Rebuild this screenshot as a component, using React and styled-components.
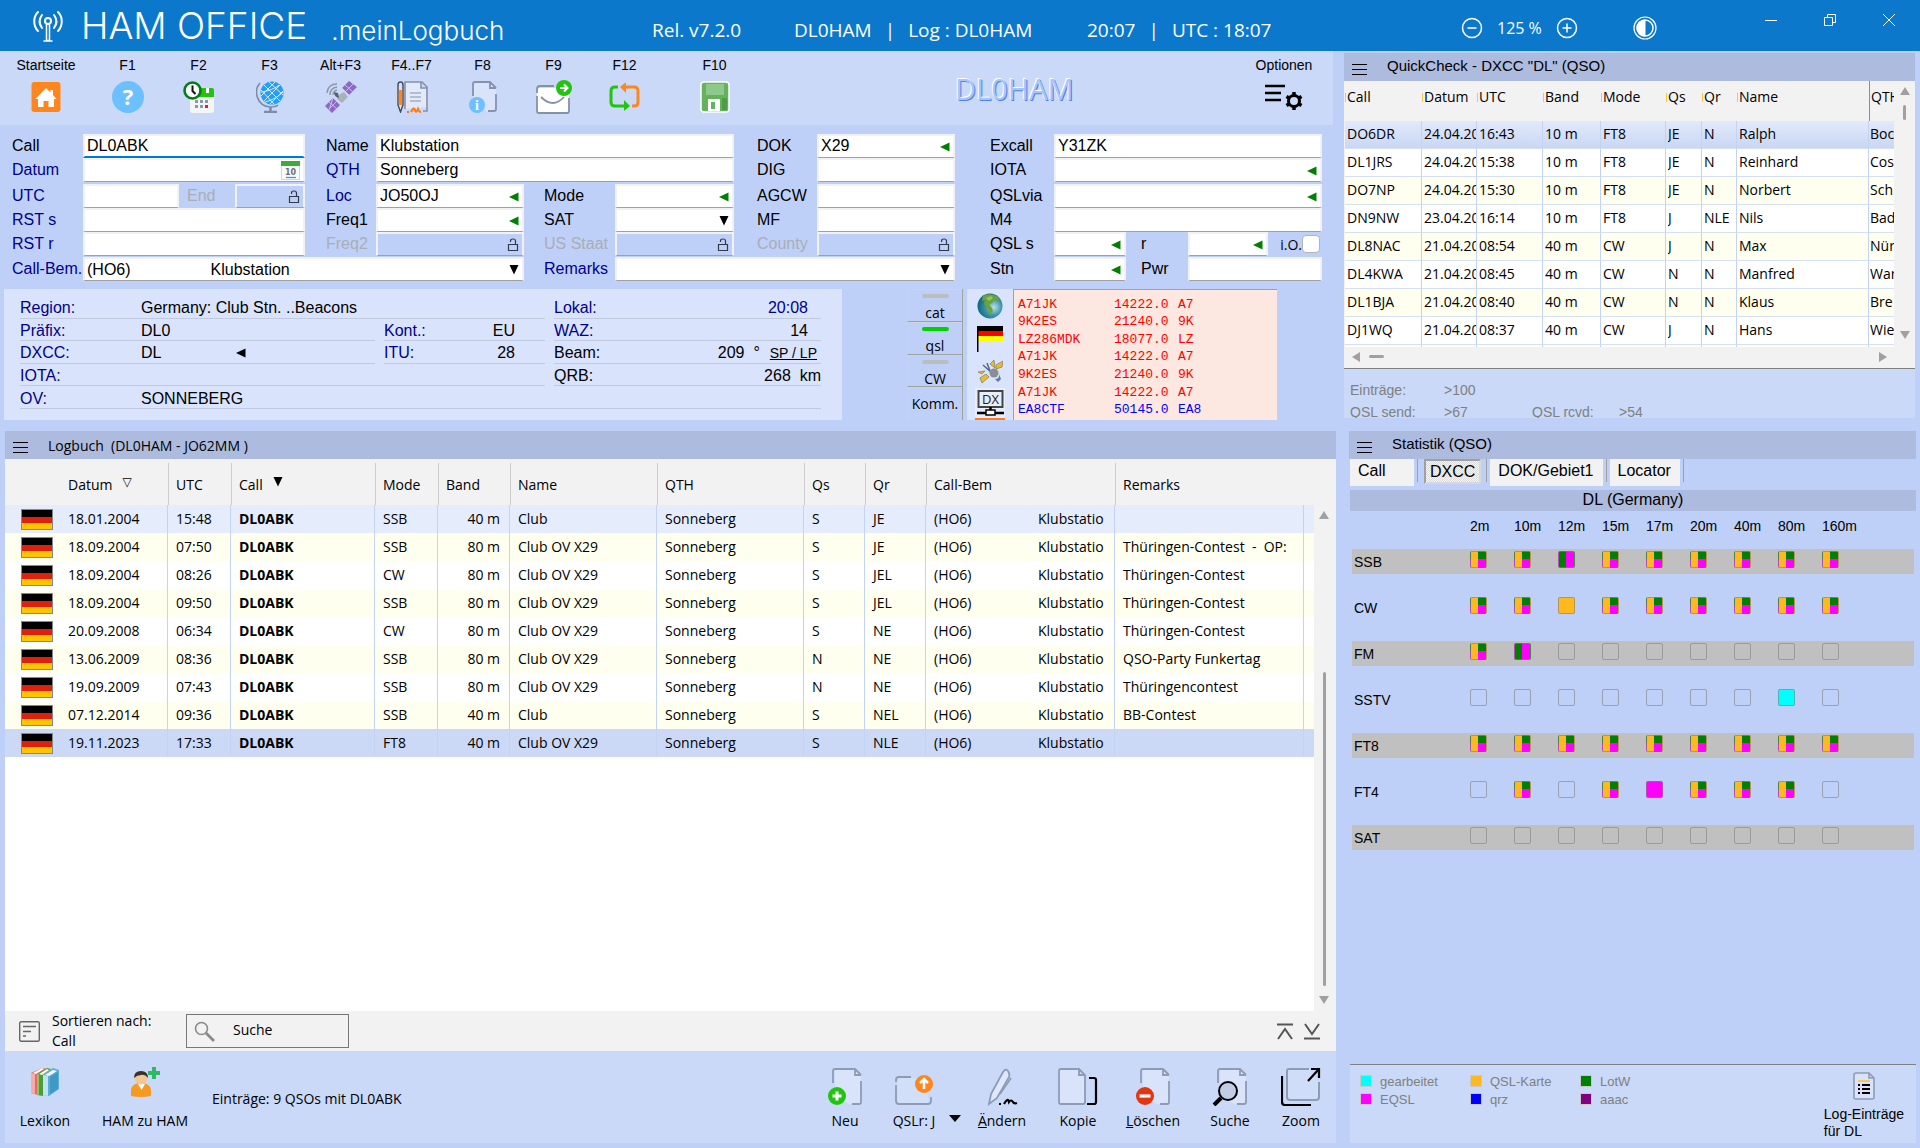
import { Fragment, useId, useState } from "react";
import styled, { createGlobalStyle, css } from "styled-components";

const COLORS = {
  title: "#0b78cc",
  page: "#bfd0f8",
  bar: "#c9d9f7",
  panelHead: "#adbbde",
  light: "#f2f2f2",
  info: "#d9e3fb",
  line: "#a0a0a0",
  navy: "#00008b",
  grid: "#c2d3f3",
  yellow: "#ffffef",
};

const SANS = `"Liberation Sans", Arial, sans-serif`;
const UI = `"Open Sans", "Noto Sans", sans-serif`;

const GlobalStyle = createGlobalStyle`
  *, *::before, *::after {
    box-sizing: border-box;
  }

  body {
    margin: 0;
    background: ${COLORS.page};
    color: #000;
    font-family: ${SANS};
  }

  button, input, select {
    margin: 0;
    padding: 0;
    border: 0;
    background: none;
    color: inherit;
    font: inherit;
  }

  svg {
    display: block;
    flex: none;
  }
`;

/* ---------- Data ---------- */

// [label, span of the field, options]
const FORM_ROWS = [
  [
    ["Call", 3, { value: "DL0ABK", focus: true }],
    ["Name", 3, { value: "Klubstation", indent: 21 }],
    ["DOK", 1, { value: "X29", indent: 23, mark: "left" }],
    ["Excall", 4, { value: "Y31ZK", indent: 35 }],
  ],
  [
    ["Datum", 3, { blue: true, mark: "calendar" }],
    ["QTH", 3, { value: "Sonneberg", blue: true, indent: 21 }],
    ["DIG", 1, { indent: 23 }],
    ["IOTA", 4, { indent: 35, mark: "left" }],
  ],
  [
    ["UTC", 1, { blue: true }],
    ["End", 1, { indent: 8, locked: true }],
    ["Loc", 1, { value: "JO50OJ", blue: true, indent: 21, mark: "left" }],
    ["Mode", 1, { indent: 20, mark: "left" }],
    ["AGCW", 1, { indent: 23 }],
    ["QSLvia", 4, { indent: 35, mark: "left" }],
  ],
  [
    ["RST s", 3, { blue: true }],
    ["Freq1", 1, { indent: 21, mark: "left" }],
    ["SAT", 1, { indent: 20, select: true }],
    ["MF", 1, { indent: 23 }],
    ["M4", 4, { indent: 35 }],
  ],
  [
    ["RST r", 3, { blue: true }],
    ["Freq2", 1, { indent: 21, locked: true }],
    ["US Staat", 1, { indent: 20, locked: true }],
    ["County", 1, { indent: 23, locked: true }],
    ["QSL s", 1, { indent: 35, mark: "left" }],
    ["r", 1, { indent: 15, mark: "left" }],
    ["i.O.", 0, { check: true }],
  ],
  [
    [
      "Call-Bem.",
      5,
      {
        value: "(HO6)" + "\u00a0".repeat(18) + "Klubstation",
        blue: true,
        select: true,
      },
    ],
    ["Remarks", 3, { blue: true, indent: 20, select: true }],
    ["Stn", 1, { indent: 35, mark: "left" }],
    ["Pwr", 2, { indent: 15 }],
  ],
];

const LOG = [
  ["18.01.2004", "15:48", "SSB", "40 m", "Club", "S", "JE", ""],
  ["18.09.2004", "07:50", "SSB", "80 m", "Club OV X29", "S", "JE", "Thüringen-Contest  -  OP:"],
  ["18.09.2004", "08:26", "CW", "80 m", "Club OV X29", "S", "JEL", "Thüringen-Contest"],
  ["18.09.2004", "09:50", "SSB", "80 m", "Club OV X29", "S", "JEL", "Thüringen-Contest"],
  ["20.09.2008", "06:34", "CW", "80 m", "Club OV X29", "S", "NE", "Thüringen-Contest"],
  ["13.06.2009", "08:36", "SSB", "80 m", "Club OV X29", "N", "NE", "QSO-Party Funkertag"],
  ["19.09.2009", "07:43", "SSB", "80 m", "Club OV X29", "N", "NE", "Thüringencontest"],
  ["07.12.2014", "09:36", "SSB", "40 m", "Club", "S", "NEL", "BB-Contest"],
  ["19.11.2023", "17:33", "FT8", "40 m", "Club OV X29", "S", "NLE", ""],
];
const LOG_COLS = [55, 108, 63, 144, 63, 72, 147, 147, 61, 61, 189, 189, 10];

const QUICK = [
  ["DO6DR", "24.04.20", "16:43", "10 m", "FT8", "JE", "N", "Ralph", "Boc"],
  ["DL1JRS", "24.04.20", "15:38", "10 m", "FT8", "JE", "N", "Reinhard", "Cos"],
  ["DO7NP", "24.04.20", "15:30", "10 m", "FT8", "JE", "N", "Norbert", "Sch"],
  ["DN9NW", "23.04.20", "16:14", "10 m", "FT8", "J", "NLE", "Nils", "Bad"],
  ["DL8NAC", "21.04.20", "08:54", "40 m", "CW", "J", "N", "Max", "Nür"],
  ["DL4KWA", "21.04.20", "08:45", "40 m", "CW", "N", "N", "Manfred", "War"],
  ["DL1BJA", "21.04.20", "08:40", "40 m", "CW", "N", "N", "Klaus", "Bre"],
  ["DJ1WQ", "21.04.20", "08:37", "40 m", "CW", "J", "N", "Hans", "Wie"],
  ["", "", "", "", "", "", "", "", ""],
];
const QUICK_COLS = [77, 55, 66, 58, 65, 36, 35, 132, 26];
const QUICK_HEAD = ["Call", "Datum", "UTC", "Band", "Mode", "Qs", "Qr", "Name", "QTH"];

const SPOTS = [
  ["A71JK", "14222.0", "A7"],
  ["9K2ES", "21240.0", "9K"],
  ["LZ286MDK", "18077.0", "LZ"],
  ["A71JK", "14222.0", "A7"],
  ["9K2ES", "21240.0", "9K"],
  ["A71JK", "14222.0", "A7"],
  ["EA8CTF", "50145.0", "EA8"],
];

// q = card + LotW + eQSL, h = LotW + eQSL, k = card, e = eQSL, w = worked, - = none
const BANDS = ["2m", "10m", "12m", "15m", "17m", "20m", "40m", "80m", "160m"];
const STATS = [
  ["SSB", "qqhqqqqqq"],
  ["CW", "qqkqqqqqq"],
  ["FM", "qh-------"],
  ["SSTV", "-------w-"],
  ["FT8", "qqqqqqqqq"],
  ["FT4", "-q-qeqqq-"],
  ["SAT", "---------"],
];
const BOX_FILL = {
  q: "linear-gradient(90deg, #ffb91f 50%, transparent 50%), linear-gradient(#008000 50%, #ff00ff 50%)",
  h: "linear-gradient(90deg, #008000 50%, #ff00ff 50%)",
  k: "#ffb91f",
  e: "#ff00ff",
  w: "#00ffff",
  "-": "transparent",
};

const LEGEND = [
  ["gearbeitet", "#00ffff"],
  ["QSL-Karte", "#ffb91f"],
  ["LotW", "#008000"],
  ["EQSL", "#ff00ff"],
  ["qrz", "#0000ff"],
  ["aaac", "#800080"],
];

/* ---------- Icons ---------- */

const AntennaIcon = () => (
  <svg width="30" height="34" viewBox="0 0 30 34" fill="none" stroke="#fff" strokeWidth="2" strokeLinecap="round">
    <path d="M5 3C0 8 0 17 5 22M9 6c-3 4-3 9 0 13M25 3c5 5 5 14 0 19M21 6c3 4 3 9 0 13" />
    <circle cx="15" cy="12" r="3" />
    <path d="M13.500 16v15.500h3V16M11 32h8" strokeWidth="1.500" />
  </svg>
);

const CircleIcon = ({ plus }) => (
  <svg width="22" height="22" viewBox="0 0 22 22" fill="none" stroke="#fff" strokeWidth="1.500">
    <circle cx="11" cy="11" r="9.500" />
    <path d={plus ? "M6.500 11h9M11 6.500v9" : "M6.500 11h9"} />
  </svg>
);

const ContrastIcon = () => (
  <svg width="24" height="24" viewBox="0 0 24 24" fill="none" stroke="#fff">
    <circle cx="12" cy="12" r="11" strokeWidth="1.200" />
    <circle cx="12" cy="12" r="8" strokeWidth="1.500" />
    <path d="M12 4a8 8 0 0 0 0 16z" fill="#fff" />
  </svg>
);

const WINDOW_PATHS = {
  Minimieren: "M0 6.500h12",
  Wiederherstellen: "M.5 3.500h8v8h-8zM3.500 3.500v-3h8v8h-3",
  Schließen: "M0 0l12 12M12 0L0 12",
};

const HomeIcon = () => (
  <svg width="30" height="32" viewBox="0 0 30 32">
    <rect x="0.500" y="1" width="29" height="30" rx="3" fill="#ff861c" />
    <path d="M15 7L4.500 18H7v8h5.500v-6h5v6H23v-8h2.500L22 14V9h-2.500v2.500z" fill="#fff" />
  </svg>
);

const HelpIcon = () => (
  <svg width="32" height="32" viewBox="0 0 32 32">
    <circle cx="16" cy="16" r="16" fill="#6cc0ff" />
    <text x="16" y="24" textAnchor="middle" fontFamily="Open Sans" fontWeight="700" fontSize="22" fill="#fff">?</text>
  </svg>
);

const ClockIcon = () => (
  <svg width="32" height="32" viewBox="0 0 32 32">
    <path d="M7 15h24v14q0 3-3 3H10q-3 0-3-3z" fill="#f4f6f6" />
    <path d="M14 7h15q2 0 2 2v7H14z" fill="#22c50d" />
    <path d="M23 7v5h3V7" fill="#fff" />
    <path d="M12 19h3v3h-3zM17 19h3v3h-3zM22 19h3v3h-3zM12 24h3v3h-3zM17 24h3v3h-3z" fill="#8a97a8" />
    <path d="M22 24h3v3h-3z" fill="#e02020" />
    <circle cx="9.500" cy="9.500" r="8" fill="#fff" stroke="#077a1b" strokeWidth="2.600" />
    <path d="M9.500 4.500v5.500l3 3" fill="none" stroke="#111" strokeWidth="2" />
  </svg>
);

const GlobeIcon = () => (
  <svg width="28" height="32" viewBox="0 0 28 32" fill="none">
    <circle cx="16" cy="12" r="11.500" fill="#249dfb" />
    <g stroke="#d6ecff" strokeWidth="1">
      <path d="M8 4l16 16M5 9l13 14M13 1l14 13M24 4L8 20M27 10L14 23M19 1L5 15" />
      <path d="M5 11c8-1 15-4 18-7M9 21c8-2 14-6 18-10" />
    </g>
    <path d="M4 2C-3 10 1 25 14 26q6 0 8-2" stroke="#7d8ca3" strokeWidth="1.600" />
    <path d="M14.500 26v4M8 31h13" stroke="#7d8ca3" strokeWidth="2.500" />
  </svg>
);

const SatelliteIcon = () => (
  <svg width="32" height="32" viewBox="0 0 32 32" fill="none">
    <g fill="#8d68c4">
      <path d="M24 0l8 6-8 8-7-7zM8 17l7 7-8 8-7-7z" />
    </g>
    <path d="M20 4l8 7M17 7l7 7M28 3l-8 8M4 21l8 7M12 20l-8 8M8 17l-4 12" stroke="#cdbdea" strokeWidth="1" />
    <path d="M14 14l5-3 4 5-6 6-5-4z" fill="#a9b2b8" />
    <path d="M9 11q0 5 5 6l-1-5z" fill="#59606b" />
    <path d="M2 12Q3 3 12 3M5 14q0-7 7-8M8 14q0-4 4-5" stroke="#8b95a5" strokeWidth="1.300" />
  </svg>
);

const SignIcon = () => (
  <svg width="34" height="32" viewBox="0 0 34 32" fill="none">
    <path d="M10 28V1h17l5 5v20M26 1v6h6" fill="#e1e9fa" stroke="#8791a5" strokeWidth="1.600" />
    <path d="M15 12h11M15 16h11M15 20h11" stroke="#a3aec0" strokeWidth="1.500" />
    <path d="M3 4q0-3 2.500-3T8 4v20l-2.500 7L3 24z" fill="#d6dff5" stroke="#404a5a" strokeWidth="1.400" />
    <path d="M3.800 9h3.400v15H3.800z" fill="#ff861c" />
    <path d="M12 31h2M16 31q3-6 4-2t3-1q1 3 3 3" stroke="#ff7a10" strokeWidth="2" />
    <path d="M28 30h4v-4" stroke="#8791a5" strokeWidth="1.600" />
  </svg>
);

const InfoIcon = () => (
  <svg width="28" height="32" viewBox="0 0 28 32" fill="none">
    <path d="M4 15V3q0-2 2-2h15l6 6v21q0 3-3 3h-6" fill="#d9e4fa" />
    <path d="M4 15V3q0-2 2-2h15l6 6M21 1v6h6M27 13v15q0 2-2 2h-6" stroke="#8791b0" strokeWidth="1.800" />
    <circle cx="8" cy="24" r="8" fill="#6cc0ff" />
    <text x="8" y="29" textAnchor="middle" fontFamily="Liberation Serif" fontWeight="700" fontSize="14" fill="#fff">i</text>
  </svg>
);

const MailIcon = () => (
  <svg width="36" height="34" viewBox="0 0 36 34" fill="none">
    <rect x="1" y="8" width="32" height="25" rx="3" fill="#fff" />
    <path d="M1 13V9q0-3 3-3h14M33 18v13q0 2-2 2H3q-2 0-2-2V16M5 17q12 12 23 0" stroke="#8791a5" strokeWidth="1.800" />
    <circle cx="28" cy="8" r="8" fill="#22c50d" />
    <path d="M24 8h7M28 4.500L31.500 8 28 11.500" stroke="#fff" strokeWidth="2" />
  </svg>
);

const SyncIcon = () => (
  <svg width="32" height="28" viewBox="0 0 32 28" fill="none" strokeWidth="3">
    <path d="M9 4H6Q2 4 2 8v11q0 4 4 4h11" stroke="#22c50d" />
    <path d="M15 17l6 6-6 5z" fill="#22c50d" />
    <path d="M23 23h2q4 0 4-4V8q0-4-4-4H14" stroke="#ff861c" />
    <path d="M17-1l-6 5 6 6z" fill="#ff861c" />
  </svg>
);

const FloppyIcon = () => (
  <svg width="30" height="32" viewBox="0 0 30 32">
    <rect x="1" y="1" width="28" height="30" rx="3" fill="#66b15b" stroke="#fff" strokeWidth="1.500" />
    <path d="M6 3h18v11H6z" fill="#8cc98a" />
    <path d="M8 18h12v12H8z" fill="#fff" />
    <path d="M11 21h4v7h-4z" fill="#66b15b" />
    <path d="M22 17h5v12h-5z" fill="#4e9c48" />
  </svg>
);

const OptionsIcon = () => (
  <svg width="40" height="28" viewBox="0 0 40 28" fill="none" stroke="#000">
    <path d="M1 3h20M1 10h16M1 17h16" strokeWidth="2.500" />
    <circle cx="30" cy="18" r="5.500" strokeWidth="3" />
    <path d="M30 9v3M30 24v3M22.500 13.500l2.500 1.500M35 21l2.500 1.500M22.500 22.500L25 21M35 15l2.500-1.500" strokeWidth="3.500" />
  </svg>
);

const LockIcon = () => (
  <svg width="12" height="14" viewBox="0 0 12 14" fill="none" stroke="#303a4c" strokeWidth="1.200">
    <path d="M1.500 6.500h9v6h-9zM3.500 4V3q0-2 2.500-2t2.500 2v3.500" />
  </svg>
);

const LeftMark = ({ color = "#008000" }) => (
  <svg width="10" height="10" viewBox="0 0 10 10">
    <path d="M0 5l9.500-4.500v9z" fill={color} />
  </svg>
);

const DownMark = () => (
  <svg width="10" height="10" viewBox="0 0 10 10">
    <path d="M.5 0h9L5 9.500z" fill="#000" />
  </svg>
);

const CaretIcon = () => (
  <svg width="12" height="7" viewBox="0 0 12 7">
    <path d="M0 0h12L6 7z" fill="#000" />
  </svg>
);

const CalendarIcon = () => (
  <svg width="19" height="19" viewBox="0 0 19 19">
    <rect x="0.500" y="0.500" width="18" height="18" fill="#f8fafb" stroke="#cfd8dc" />
    <path d="M0 0h19v5H0z" fill="#3fab3c" />
    <text x="9.500" y="14" textAnchor="middle" fontFamily="DejaVu Sans" fontWeight="700" fontSize="8" fill="#707070">10</text>
    <path d="M5 16.500h10" stroke="#25a5e8" strokeWidth="1.300" />
  </svg>
);

const EarthIcon = () => (
  <svg width="26" height="26" viewBox="0 0 26 26">
    <defs>
      <radialGradient id="sea" cx="0.65" cy="0.55" r="0.65">
        <stop offset="0" stopColor="#b8e3ea" />
        <stop offset="0.500" stopColor="#3d93ab" />
        <stop offset="1" stopColor="#0c6678" />
      </radialGradient>
    </defs>
    <circle cx="13" cy="13" r="12.500" fill="url(#sea)" />
    <path d="M6 3q7-4 15 1l1 5-5-2-2 3-3 2 3 3 1 3-4 4-1-6-4-5 1-4-3 1z" fill="#6aa33a" />
    <path d="M9 5l5-2 2 2-4 3z" fill="#9cc25c" />
  </svg>
);

const FlagPoleIcon = () => (
  <svg width="26" height="26" viewBox="0 0 26 26">
    <path d="M0 0h26v6H0z" fill="#000" />
    <path d="M0 5h26v5H0z" fill="#f00" />
    <path d="M0 10h26v6H0z" fill="#ff0" />
    <path d="M0 0h1.500v26H0z" fill="#000" />
  </svg>
);

const ProbeIcon = () => (
  <svg width="26" height="24" viewBox="0 0 26 24">
    <path d="M13 4l4-4 1 8zM19 5l7-4-1 6-6 2zM3 18l6-4 3 3-7 6zM1 12l7-1-3 3z" fill="#e8bd35" stroke="#7f7a55" strokeWidth="0.700" />
    <path d="M6 5l9 8M10 3l3 8" stroke="#4a6a94" strokeWidth="1.500" />
    <circle cx="17" cy="13" r="4.500" fill="#8b8d95" />
    <path d="M18 19q5 0 4-5l2 5-3 3z" fill="#5f79a8" />
  </svg>
);

const DxIcon = () => (
  <svg width="27" height="26" viewBox="0 0 27 26" fill="none" stroke="#444">
    <path d="M1.500 1h24v16h-24z" fill="#e6eefc" strokeWidth="2" />
    <text x="13.500" y="14" textAnchor="middle" fontFamily="Open Sans" fontSize="13" fill="#222" stroke="none">DX</text>
    <path d="M13.500 17v3M0 23h27" stroke="#000" strokeWidth="2.500" />
    <path d="M9 20h9v5H9z" fill="#fff" stroke="#000" strokeWidth="1.500" />
  </svg>
);

const FlagIcon = () => (
  <svg width="32" height="21" viewBox="0 0 32 21">
    <rect width="32" height="21" fill="#888" />
    <path d="M1 1h30v7H1z" fill="#000" />
    <path d="M1 8h30v6H1z" fill="#e0200f" />
    <path d="M1 14h30v6H1z" fill="#ffc400" />
  </svg>
);

const MenuIcon = () => (
  <svg width="15" height="11" viewBox="0 0 15 11" stroke="#000">
    <path d="M0 .5h15M0 5.500h15M0 10.500h15" />
  </svg>
);

const SortIcon = () => (
  <svg width="21" height="21" viewBox="0 0 21 21" fill="none" stroke="#666" strokeWidth="1.400">
    <rect x="0.700" y="0.700" width="19.600" height="19.600" rx="1.500" />
    <path d="M4 5.500h13M4 10.500h8M4 15h3" />
  </svg>
);

const LensIcon = () => (
  <svg width="21" height="21" viewBox="0 0 21 21" fill="none" stroke="#8a8a8a">
    <circle cx="7.500" cy="7.500" r="6" strokeWidth="1.600" />
    <path d="M12 12l8 8" strokeWidth="2.800" />
  </svg>
);

const JumpIcon = ({ down }) => (
  <svg width="16" height="17" viewBox="0 0 16 17" fill="none" stroke="#555" strokeWidth="2">
    <path d={down ? "M0 15.500h16M1 1l7 10 7-10" : "M0 1.500h16M1 16L8 6l7 10"} />
  </svg>
);

const BooksIcon = () => (
  <svg width="30" height="30" viewBox="0 0 30 30">
    <path d="M1 6l11-5 5 1-9 5v21l-7-2z" fill="#ea6a63" />
    <path d="M1 6l4 1v20l-4-1z" fill="#f6aca4" />
    <path d="M7 7l10-6 4 1-8 6v21l-6-1z" fill="#4f9c35" />
    <path d="M7 7l2 .5V28l-2-.5z" fill="#8cc470" />
    <path d="M13 8l10-7 6 2v19l-10 7-6-1z" fill="#58aed6" />
    <path d="M13 8l5 1v20l-5-1z" fill="#c0e3f2" />
    <path d="M20 10l8-5v17l-8 5z" fill="#3f98c8" />
    <path d="M3 6l9-5 2 1-8 5zM9 7l8-5 2 1-7 5zM15 8l8-5 4 1-8 5z" fill="#fbf8f2" />
  </svg>
);

const PersonIcon = () => (
  <svg width="30" height="30" viewBox="0 0 30 30">
    <path d="M1 29v-5q0-7 8-8h4q8 1 8 8v5q-10 2-20 0z" fill="#f59a1e" />
    <path d="M8 17l3.500 6 3.500-6z" fill="#fff" />
    <circle cx="11" cy="11" r="6.500" fill="#f3c795" />
    <path d="M4 11Q4 4 11 4t7 7q-3-4-7-3-4 0-7 3z" fill="#37302b" />
    <path d="M22 0h4v4h4v4h-4v4h-4V8h-4V4h4z" fill="#2fb964" />
  </svg>
);

const Sheet = () => (
  <>
    <path d="M8 14V3q0-2 2-2h17l7 6v26q0 3-3 3h-9L8 28z" fill="#d9e4fa" />
    <path d="M6 15V3q0-2 2-2h20l6 6M28 1v6h6M34 13v21q0 2-2 2h-7" stroke="#8f9bb5" strokeWidth="1.800" />
  </>
);

const NewIcon = () => (
  <svg width="36" height="38" viewBox="0 0 36 38" fill="none">
    <Sheet />
    <circle cx="10" cy="28" r="9" fill="#22c50d" />
    <path d="M5.500 28h9M10 23.500v9" stroke="#fff" strokeWidth="3" />
  </svg>
);

const QslIcon = () => (
  <svg width="38" height="38" viewBox="0 0 38 38" fill="none">
    <path d="M3 10h30v26H3z" fill="#d2dff8" />
    <path d="M1 14v-2q0-3 3-3h12M1 17v16q0 3 3 3h29q3 0 3-3v-4" stroke="#8f9bb5" strokeWidth="1.800" />
    <circle cx="29" cy="16" r="9" fill="#ff861c" />
    <path d="M29 21v-9M25 15l4-4 4 4" stroke="#fff" strokeWidth="2.600" />
  </svg>
);

const EditIcon = () => (
  <svg width="32" height="38" viewBox="0 0 32 38" fill="none">
    <path d="M3 36l2-10L17 4q3-4 5-1t1 6L11 30z" fill="#dfe8fb" stroke="#8f9bb5" strokeWidth="1.800" />
    <path d="M25 10L14 26" stroke="#8f9bb5" strokeWidth="1.800" />
    <path d="M13 36h2M18 36q4-7 5-2 2-3 4 0 1 2 4 1" stroke="#000" strokeWidth="2.200" />
  </svg>
);

const CopyIcon = () => (
  <svg width="40" height="38" viewBox="0 0 40 38" fill="none">
    <path d="M3 1h18l6 6v27q0 2-2 2H3q-2 0-2-2V3q0-2 2-2zM21 1v6h6" fill="#d9e4fa" stroke="#8f9bb5" strokeWidth="1.800" />
    <path d="M31 10h5q2 0 2 2v22q0 2-2 2h-7" stroke="#000" strokeWidth="2.200" />
  </svg>
);

const DeleteIcon = () => (
  <svg width="36" height="38" viewBox="0 0 36 38" fill="none">
    <Sheet />
    <circle cx="10" cy="28" r="9" fill="#e23510" />
    <path d="M4.500 28h11" stroke="#fff" strokeWidth="3.200" />
  </svg>
);

const FindIcon = () => (
  <svg width="36" height="38" viewBox="0 0 36 38" fill="none">
    <Sheet />
    <circle cx="16" cy="23" r="9" fill="#c0cde4" stroke="#000" strokeWidth="2" />
    <path d="M9 30l-7 7" stroke="#000" strokeWidth="4" />
  </svg>
);

const ZoomIcon = () => (
  <svg width="40" height="38" viewBox="0 0 40 38" fill="none">
    <path d="M28 1H8Q6 1 6 3v26q0 3 3 3h26q3 0 3-3V14" fill="#d0ddf8" stroke="#8f9bb5" strokeWidth="2" />
    <path d="M1 8v26q0 3 3 3h26M27 13L38 1M30 1h8v9" stroke="#000" strokeWidth="2.200" />
  </svg>
);

const ListIcon = () => (
  <svg width="22" height="28" viewBox="0 0 22 28" fill="none">
    <path d="M3 1h13l5 5v19q0 2-2 2H3q-2 0-2-2V3q0-2 2-2zM16 1v5h5" fill="#d9e4fa" stroke="#8f9bb5" strokeWidth="1.600" />
    <path d="M5 9h12" stroke="#f2cb5b" strokeWidth="2" />
    <path d="M5 13h2M9 13h8M5 17h2M9 17h8M5 21h2M9 21h8" stroke="#000" strokeWidth="2" />
  </svg>
);

const ScrollArrow = ({ dir }) => (
  <svg width="12" height="12" viewBox="0 0 12 12">
    <path
      d={{ up: "M6 2l5 8H1z", down: "M6 10L1 2h10z", left: "M2 6l8-5v10z", right: "M10 6L2 1v10z" }[dir]}
      fill="#a0a0a0"
    />
  </svg>
);

const TOOLS = [
  ["F1", HelpIcon],
  ["F2", ClockIcon],
  ["F3", GlobeIcon],
  ["Alt+F3", SatelliteIcon],
  ["F4..F7", SignIcon],
  ["F8", InfoIcon],
  ["F9", MailIcon],
  ["F12", SyncIcon],
];

/* ---------- Components ---------- */

const Field = ({ label, span, options }) => {
  const id = useId();
  const { value = "", indent = 0, blue, focus, locked, select, check, mark } = options;
  const [text, setText] = useState(value);

  if (check) {
    return (
      <CheckCell>
        <label htmlFor={id}>{label}</label>
        <CheckBox id={id} type="checkbox" />
      </CheckCell>
    );
  }

  return (
    <>
      <FieldLabel htmlFor={id} $indent={indent} $blue={blue} $muted={locked}>
        {label}
      </FieldLabel>
      <FieldBox $span={span} $focus={focus} $locked={locked}>
        {select ? (
          <SelectInput id={id} defaultValue={value}>
            <option>{value}</option>
          </SelectInput>
        ) : (
          <TextInput id={id} value={text} disabled={locked} onChange={(e) => setText(e.target.value)} />
        )}
        {select && <DownMark />}
        {mark === "left" && <LeftMark />}
        {mark === "calendar" && <CalendarIcon />}
        {locked && <LockIcon />}
      </FieldBox>
    </>
  );
};

const Header = () => (
  <TitleBar>
    <Brand>
      <AntennaIcon />
      <BrandName>HAM OFFICE</BrandName>
      <BrandSub>.meinLogbuch</BrandSub>
    </Brand>
    <TitleText>Rel. v7.2.0</TitleText>
    <TitleText>
      <span>DL0HAM</span>
      <span>|</span>
      <span>Log : DL0HAM</span>
    </TitleText>
    <TitleText>
      <span>20:07</span>
      <span>|</span>
      <span>UTC : 18:07</span>
    </TitleText>
    <ZoomGroup>
      <button aria-label="Verkleinern"><CircleIcon /></button>
      <span>125 %</span>
      <button aria-label="Vergrößern"><CircleIcon plus /></button>
    </ZoomGroup>
    <ContrastButton aria-label="Kontrast"><ContrastIcon /></ContrastButton>
    <WindowButtons>
      {Object.entries(WINDOW_PATHS).map(([name, d]) => (
        <button key={name} aria-label={name}>
          <svg width="12" height="12" viewBox="0 0 12 12" fill="none" stroke="#fff"><path d={d} /></svg>
        </button>
      ))}
    </WindowButtons>
  </TitleBar>
);

const Info = () => (
  <InfoBox>
    <InfoRow $span={2}><InfoKey>Region:</InfoKey>Germany: Club Stn. ..Beacons</InfoRow>
    <InfoRow><InfoKey $short>Lokal:</InfoKey><InfoValue $blue>20:08</InfoValue></InfoRow>
    <InfoRow><InfoKey>Präfix:</InfoKey>DL0</InfoRow>
    <InfoRow><InfoKey $short>Kont.:</InfoKey><InfoValue $wide>EU</InfoValue></InfoRow>
    <InfoRow><InfoKey $short>WAZ:</InfoKey><InfoValue>14</InfoValue></InfoRow>
    <InfoRow><InfoKey>DXCC:</InfoKey><Dxcc>DL</Dxcc><LeftMark color="#000" /></InfoRow>
    <InfoRow><InfoKey $short>ITU:</InfoKey><InfoValue $wide>28</InfoValue></InfoRow>
    <InfoRow><InfoKey $short $black>Beam:</InfoKey><InfoValue $end>209&nbsp; °</InfoValue><PathLink href="#path">SP / LP</PathLink></InfoRow>
    <InfoRow $span={2}><InfoKey>IOTA:</InfoKey></InfoRow>
    <InfoRow><InfoKey $short $black>QRB:</InfoKey><InfoValue $end>268 &nbsp;km</InfoValue></InfoRow>
    <InfoRow $span={3}><InfoKey>OV:</InfoKey>SONNEBERG</InfoRow>
  </InfoBox>
);

const Logbook = () => (
  <LogPanel>
    <PanelHead $ui>
      <button aria-label="Menü"><MenuIcon /></button>
      <span>{"Logbuch  (DL0HAM - JO62MM )"}</span>
    </PanelHead>
    <LogArea>
      <div>
        <LogTable>
          <colgroup>
            {LOG_COLS.map((w, i) => <col key={i} style={{ width: w }} />)}
          </colgroup>
          <thead>
            <tr>
              <th aria-label="Flagge" />
              <th><SortHead>Datum<HollowMark>▽</HollowMark></SortHead></th>
              <th>UTC</th>
              <th><SortHead>Call<DownMark /></SortHead></th>
              <th>Mode</th>
              <th>Band</th>
              <th>Name</th>
              <th>QTH</th>
              <th>Qs</th>
              <th>Qr</th>
              <th>Call-Bem</th>
              <th colSpan={2}>Remarks</th>
            </tr>
          </thead>
          <tbody>
            {LOG.map(([date, utc, mode, band, name, qs, qr, remarks]) => (
              <tr key={date + utc}>
                <td><FlagIcon /></td>
                <td>{date}</td>
                <td>{utc}</td>
                <td><b>DL0ABK</b></td>
                <td>{mode}</td>
                <td>{band}</td>
                <td>{name}</td>
                <td>Sonneberg</td>
                <td>{qs}</td>
                <td>{qr}</td>
                <td><CallNote><span>(HO6)</span><span>Klubstatio</span></CallNote></td>
                <td>{remarks}</td>
                <td />
              </tr>
            ))}
          </tbody>
        </LogTable>
      </div>
      <LogScroll>
        <ScrollArrow dir="up" />
        <LogThumb />
        <ScrollArrow dir="down" />
      </LogScroll>
    </LogArea>
    <SortBar>
      <button aria-label="Sortierung"><SortIcon /></button>
      <SortText>Sortieren nach:<br />Call</SortText>
      <SearchBox>
        <LensIcon />
        <input aria-label="Suche" placeholder="Suche" />
      </SearchBox>
      <Jump>
        <button aria-label="Zum Anfang"><JumpIcon /></button>
        <button aria-label="Zum Ende"><JumpIcon down /></button>
      </Jump>
    </SortBar>
    <ActionBar>
      <Action $width={80}><BooksIcon />Lexikon</Action>
      <Action $width={120}><PersonIcon />HAM zu HAM</Action>
      <Count>Einträge: 9 QSOs mit DL0ABK</Count>
      <Action $width={68}><NewIcon />Neu</Action>
      <Action $width={70}><QslIcon />QSLr: J</Action>
      <DropButton aria-label="QSL-Auswahl"><CaretIcon /></DropButton>
      <Action $width={78}><EditIcon /><span><u>Ä</u>ndern</span></Action>
      <Action $width={74}><CopyIcon />Kopie</Action>
      <Action $width={76}><DeleteIcon /><span><u>L</u>öschen</span></Action>
      <Action $width={78}><FindIcon />Suche</Action>
      <Action $width={64}><ZoomIcon />Zoom</Action>
    </ActionBar>
  </LogPanel>
);

const QuickCheck = () => (
  <QuickPanel>
    <PanelHead>
      <button aria-label="Menü"><MenuIcon /></button>
      <span>QuickCheck - DXCC "DL" (QSO)</span>
    </PanelHead>
    <QuickArea>
      <QuickView>
        <QuickTable>
          <colgroup>
            {QUICK_COLS.map((w, i) => <col key={i} style={{ width: w }} />)}
          </colgroup>
          <thead>
            <tr>{QUICK_HEAD.map((name) => <th key={name}>{name}</th>)}</tr>
          </thead>
          <tbody>
            {QUICK.map((row) => (
              <tr key={row[0]}>
                {row.map((cell, i) => (
                  <td key={i}><Clip>{cell}</Clip></td>
                ))}
              </tr>
            ))}
          </tbody>
        </QuickTable>
      </QuickView>
      <QuickScrollY>
        <ScrollArrow dir="up" />
        <ShortThumb />
        <ScrollArrow dir="down" />
      </QuickScrollY>
    </QuickArea>
    <QuickScrollX>
      <ScrollArrow dir="left" />
      <ShortThumb $flat />
      <ScrollArrow dir="right" />
    </QuickScrollX>
    <QuickFoot>
      <span>Einträge:</span><span>&gt;100</span><span /><span />
      <span>QSL send:</span><span>&gt;67</span><span>QSL rcvd:</span><span>&gt;54</span>
    </QuickFoot>
  </QuickPanel>
);

const Statistics = () => {
  const [tab, setTab] = useState("DXCC");
  return (
    <StatPanel>
      <PanelHead>
        <button aria-label="Menü"><MenuIcon /></button>
        <span>Statistik (QSO)</span>
      </PanelHead>
      <Tabs>
        {["Call", "DXCC", "DOK/Gebiet1", "Locator"].map((name) => (
          <Fragment key={name}>
            <Tab $active={tab === name} $first={name === "Call"} onClick={() => setTab(name)}>{name}</Tab>
            <TabLine />
          </Fragment>
        ))}
      </Tabs>
      <Country>DL (Germany)</Country>
      <StatTable>
        <thead>
          <tr>
            <th aria-label="Mode" />
            {BANDS.map((band) => <th key={band}>{band}</th>)}
          </tr>
        </thead>
        <tbody>
          {STATS.map(([mode, marks]) => (
            <tr key={mode}>
              <th>{mode}</th>
              {marks.split("").map((mark, i) => (
                <td key={i}><StatBox $mark={mark} /></td>
              ))}
            </tr>
          ))}
        </tbody>
      </StatTable>
      <StatFoot>
        <Legend>
          {LEGEND.map(([name, color]) => (
            <LegendItem key={name} $color={color}>{name}</LegendItem>
          ))}
        </Legend>
        <LogButton><ListIcon /><span>Log-Einträge<br />für DL</span></LogButton>
      </StatFoot>
    </StatPanel>
  );
};

const App = () => (
  <>
    <GlobalStyle />
    <Page>
      <Header />
      <Main>
        <LeftColumn>
          <Toolbar>
            <ToolButton $width={92}><span>Startseite</span><ToolIcon><HomeIcon /></ToolIcon></ToolButton>
            {TOOLS.map(([name, Icon]) => (
              <ToolButton key={name}><span>{name}</span><ToolIcon><Icon /></ToolIcon></ToolButton>
            ))}
            <ToolButton $width={109}><span>F10</span><ToolIcon><FloppyIcon /></ToolIcon></ToolButton>
            <Callsign>DL0HAM</Callsign>
            <ToolButton $width={98}><span>Optionen</span><ToolIcon><OptionsIcon /></ToolIcon></ToolButton>
          </Toolbar>
          <Form>
            {FORM_ROWS.flat().map(([label, span, options]) => (
              <Field key={label} label={label} span={span} options={options} />
            ))}
          </Form>
          <Middle>
            <Info />
            <ModeButtons>
              <ModeButton><Lamp />cat</ModeButton>
              <ModeButton><Lamp $on />qsl</ModeButton>
              <ModeButton><Lamp />CW</ModeButton>
              <ModeButton>Komm.</ModeButton>
            </ModeButtons>
            <Cluster>
              <ClusterIcons>
                <button aria-label="Karte"><EarthIcon /></button>
                <button aria-label="Land"><FlagPoleIcon /></button>
                <button aria-label="Satelliten"><ProbeIcon /></button>
                <button aria-label="DX-Cluster"><DxIcon /></button>
              </ClusterIcons>
              <SpotList>
                {SPOTS.map(([call, freq, prefix], i) => (
                  <Spot key={i} $blue={prefix === "EA8"}>
                    <span>{call}</span>
                    <span>{freq}</span>
                    <span>{prefix}</span>
                  </Spot>
                ))}
              </SpotList>
            </Cluster>
          </Middle>
          <Logbook />
        </LeftColumn>
        <RightColumn>
          <QuickCheck />
          <Statistics />
        </RightColumn>
      </Main>
    </Page>
  </>
);

/* ---------- Frame ---------- */

const Page = styled.div`
  display: flex;
  flex-direction: column;
  min-height: 100vh;
`;

const TitleBar = styled.header`
  display: grid;
  grid-template-columns: 652fr 142fr 293fr 374fr 172fr 24px 263fr;
  align-items: center;
  height: 51px;
  background: ${COLORS.title};
  color: #fff;
  font-family: ${UI};
`;

const Brand = styled.div`
  display: flex;
  align-items: center;
  padding-left: 33px;
  font-family: Inter, sans-serif;
  font-weight: 300;
  white-space: nowrap;
`;

const BrandName = styled.span`
  margin-left: 18px;
  font-size: 37px;
  line-height: 40px;
`;

const BrandSub = styled.span`
  margin-left: 24px;
  padding-top: 10px;
  font-size: 26px;
  line-height: 32px;
`;

const TitleText = styled.div`
  display: flex;
  gap: 13px;
  padding-top: 8px;
  font-size: 19px;
  white-space: nowrap;
`;

const ZoomGroup = styled.div`
  display: flex;
  align-items: center;
  gap: 14px;
  padding-top: 5px;
  font-size: 16px;
`;

const ContrastButton = styled.button`
  padding-top: 5px;
`;

const WindowButtons = styled.div`
  display: flex;
  justify-content: flex-end;
  gap: 47px;
  padding: 0 25px 12px 0;
`;

const Main = styled.main`
  display: grid;
  grid-template-columns: minmax(0, 1336fr) minmax(0, 584fr);
  flex: 1;
  padding-bottom: 5px;
`;

const LeftColumn = styled.div`
  display: flex;
  flex-direction: column;
`;

const RightColumn = styled.div`
  display: flex;
  flex-direction: column;
  gap: 13px;
  padding-top: 2px;
`;

const PanelHead = styled.div`
  display: flex;
  align-items: center;
  gap: 20px;
  height: 28px;
  padding-left: 8px;
  background: ${COLORS.panelHead};
  font-family: ${({ $ui }) => ($ui ? UI : SANS)};
  font-size: ${({ $ui }) => ($ui ? 14 : 15)}px;
  white-space: pre;

  button {
    padding-top: 4px;
  }

  span {
    padding-bottom: ${({ $ui }) => ($ui ? 0 : 3)}px;
  }
`;

/* ---------- Toolbar ---------- */

const Toolbar = styled.div`
  display: flex;
  height: 74px;
  margin-right: 3px;
  background: ${COLORS.bar};
`;

const ToolButton = styled.button`
  display: flex;
  flex-direction: column;
  align-items: center;
  flex: none;
  width: ${({ $width = 71 }) => $width}px;
  padding-top: 6px;
  font-size: 14px;
  line-height: 16px;
`;

const ToolIcon = styled.span`
  display: flex;
  align-items: center;
  height: 34px;
  margin-top: 7px;
`;

const Callsign = styled.div`
  flex: 1;
  padding: 16px 0 0 186px;
  color: #a9c5f8;
  font-family: ${UI};
  font-size: 29px;
  line-height: 44px;
  text-shadow: -1px -1px 0 #fff, 1px 1px 0 #4d82e8;
`;

/* ---------- Form ---------- */

const Form = styled.form`
  display: grid;
  grid-template-columns:
    71px 96fr 56px 70fr 71px 148fr 91px 119fr 83px 138fr
    99px 72fr 62px 80fr 54px;
  grid-template-rows: 24px 26px 24px 24px 25px 24px;
  align-items: start;
  padding: 9px 14px 0 12px;
  font-size: 16px;
`;

const FieldLabel = styled.label`
  padding-left: ${({ $indent }) => $indent}px;
  color: ${({ $blue, $muted }) => ($muted ? "#a9adb5" : $blue ? COLORS.navy : "#000")};
  line-height: 24px;
  white-space: nowrap;
`;

const FieldBox = styled.div`
  display: flex;
  align-items: center;
  grid-column: span ${({ $span }) => $span};
  min-width: 0;
  height: 24px;
  padding: 0 3px 0 2px;
  border: 2px solid ${COLORS.light};
  border-bottom: ${({ $focus }) => ($focus ? "2px solid #0078d7" : `1px solid ${COLORS.line}`)};
  background: ${({ $locked }) => ($locked ? COLORS.page : "#fff")};
`;

const TextInput = styled.input`
  flex: 1;
  min-width: 0;
  height: 20px;
  padding-bottom: 1px;
  outline: none;
`;

const SelectInput = styled.select`
  flex: 1;
  min-width: 0;
  height: 20px;
  appearance: none;
  outline: none;
`;

const CheckCell = styled.div`
  display: flex;
  align-items: center;
  justify-content: flex-end;
  height: 24px;
  padding-right: 2px;
  font-family: ${UI};
  font-size: 14px;
`;

const CheckBox = styled.input`
  appearance: none;
  width: 18px;
  height: 18px;
  border: 1px solid #b4b4b4;
  border-radius: 4px;
  background: #fff;
`;

/* ---------- Info and cluster ---------- */

const Middle = styled.div`
  display: flex;
  height: 131px;
  margin: 8px 59px 11px 4px;
`;

const InfoBox = styled.div`
  display: grid;
  grid-template-columns: 355fr 161fr 267fr;
  grid-auto-rows: 1fr;
  column-gap: 9px;
  flex: 1;
  padding: 7px 21px 11px 16px;
  background: ${COLORS.info};
  font-size: 16px;
`;

const InfoRow = styled.div`
  display: flex;
  align-items: center;
  grid-column: span ${({ $span = 1 }) => $span};
  padding-top: 3px;
  border-bottom: 1px solid #c0cadf;
  line-height: 18px;
  white-space: nowrap;
`;

const InfoKey = styled.span`
  flex: none;
  width: ${({ $short }) => ($short ? 60 : 121)}px;
  color: ${({ $black }) => ($black ? "#000" : COLORS.navy)};
`;

const Dxcc = styled.span`
  width: 95px;
`;

const InfoValue = styled.span`
  flex: 1;
  padding-right: ${({ $wide, $end }) => ($end ? 0 : $wide ? 30 : 13)}px;
  color: ${({ $blue }) => ($blue ? COLORS.navy : "#000")};
  text-align: right;
`;

const PathLink = styled.a`
  margin: 0 4px 0 10px;
  color: #000;
  font-size: 14px;
`;

const ModeButtons = styled.div`
  display: grid;
  grid-template-rows: repeat(4, 1fr);
  width: 56px;
  margin-left: 65px;
  border-right: 1px solid ${COLORS.line};
`;

const ModeButton = styled.button`
  display: flex;
  flex-direction: column;
  align-items: center;
  min-height: 0;
  overflow: hidden;
  border-top: 1px solid #cdd3df;
  border-left: 1px solid #cdd3df;
  border-bottom: 1px solid ${COLORS.line};
  font-family: ${UI};
  font-size: 14px;
  line-height: 20px;

  &:last-child {
    justify-content: center;
    border-bottom: 0;
  }
`;

const Lamp = styled.span`
  flex: none;
  width: 27px;
  height: 4px;
  margin: 4px 0 5px;
  border-radius: 2px;
  background: ${({ $on }) => ($on ? "#00d200" : "#bdbdbd")};
`;

const Cluster = styled.div`
  display: flex;
  width: 310px;
  margin-left: 4px;
`;

const ClusterIcons = styled.div`
  display: grid;
  grid-template-rows: 33px 34px 32px 32px;
  width: 46px;
  background: ${COLORS.info};

  button {
    display: flex;
    align-items: center;
    justify-content: center;
    margin: 0 8px;
  }

  button:last-child {
    border-bottom: 2px solid #ff7b1a;
    background: #e6eefc;
  }
`;

const SpotList = styled.div`
  display: grid;
  grid-auto-rows: 1fr;
  align-items: center;
  flex: 1;
  padding: 6px 0 1px 4px;
  border-top: 1px solid ${COLORS.line};
  border-left: 1px solid ${COLORS.line};
  background: #fce8e0;
  font-family: "Liberation Mono", monospace;
  font-size: 13px;
  line-height: 16px;
`;

const Spot = styled.div`
  display: grid;
  grid-template-columns: 96px 64px 1fr;
  color: ${({ $blue }) => ($blue ? "#0000ff" : "#ff0000")};
`;

/* ---------- Logbook ---------- */

const LogPanel = styled.section`
  display: flex;
  flex-direction: column;
  flex: 1;
  margin-left: 5px;
  font-family: ${UI};
  font-size: 14px;
`;

const LogArea = styled.div`
  display: grid;
  grid-template-columns: minmax(0, 1fr) 22px;
  flex: 1;
  background: #fff;
`;

const LogTable = styled.table`
  width: 100%;
  border-collapse: separate;
  border-spacing: 0;
  table-layout: fixed;

  thead {
    background: ${COLORS.light};
  }

  th {
    height: 46px;
    padding: 5px 0 0 7px;
    background: linear-gradient(#cdcdcd, #cdcdcd) 0 4px / 1px 100% no-repeat;
    font-weight: 400;
    text-align: left;
    white-space: nowrap;
  }

  th:first-child,
  th:nth-child(2) {
    background: none;
  }

  th {
    padding-left: 8px;
  }

  td {
    height: 28px;
    padding: 0 0 2px 8px;
    border-right: 1px solid ${COLORS.grid};
    white-space: pre;
  }

  td:first-child {
    padding: 0 0 0 16px;
    border-right: 0;
  }

  td:last-child {
    border-right: 0;
  }

  td:nth-child(6) {
    padding-right: 9px;
    text-align: right;
  }

  tbody tr:nth-child(even) {
    background: ${COLORS.yellow};
  }

  tbody tr:first-child {
    background: #e5ecfc;
  }

  tbody tr:last-child {
    background: #ccd9f6;
  }
`;

const SortHead = styled.span`
  display: flex;
  align-items: center;
  gap: 10px;

  svg {
    margin-bottom: 6px;
  }
`;

const HollowMark = styled.span`
  margin-bottom: 6px;
  font-family: "DejaVu Sans", sans-serif;
  font-size: 12px;
`;

const CallNote = styled.span`
  display: grid;
  grid-template-columns: 104px 1fr;
`;

const LogScroll = styled.div`
  display: flex;
  flex-direction: column;
  align-items: center;
  padding: 50px 2px 5px 0;
  background: ${COLORS.light};
`;

const LogThumb = styled.div`
  flex: 1;
  width: 3px;
  margin: 151px 0 8px;
  border-radius: 2px;
  background: #a0a0a0;
`;

const SortBar = styled.div`
  display: flex;
  align-items: center;
  height: 40px;
  padding: 0 16px 0 14px;
  background: ${COLORS.light};
`;

const SortText = styled.div`
  width: 134px;
  margin-left: 12px;
  line-height: 20px;
`;

const SearchBox = styled.label`
  display: flex;
  align-items: center;
  gap: 18px;
  width: 163px;
  height: 34px;
  padding-left: 7px;
  border: 1px solid #777;

  input {
    width: 100px;
    padding-bottom: 3px;
    outline: none;
  }

  input::placeholder {
    color: #000;
    opacity: 1;
  }
`;

const Jump = styled.div`
  display: flex;
  gap: 11px;
  margin-left: auto;
`;

const ActionBar = styled.div`
  display: flex;
  height: 92px;
  padding-right: 3px;
  background: ${COLORS.bar};
`;

const Action = styled.button`
  display: flex;
  flex-direction: column;
  align-items: center;
  justify-content: flex-end;
  gap: 5px;
  flex: none;
  width: ${({ $width }) => $width}px;
  padding-bottom: 12px;
  line-height: 20px;
  white-space: nowrap;

  &:nth-child(-n + 2) {
    gap: 14px;
  }
`;

const Count = styled.div`
  flex: 1;
  padding: 38px 0 0 7px;
  line-height: 20px;
`;

const DropButton = styled.button`
  align-self: flex-end;
  width: 12px;
  margin-right: 2px;
  padding-bottom: 21px;
`;

/* ---------- QuickCheck ---------- */

const QuickPanel = styled.section`
  margin: 0 5px 0 8px;
`;

const QuickArea = styled.div`
  display: grid;
  grid-template-columns: minmax(0, 1fr) 21px;
  height: 266px;
  padding-left: 1px;
  background: ${COLORS.light};
`;

const QuickView = styled.div`
  overflow: hidden;
`;

const QuickTable = styled.table`
  width: 100%;
  border-collapse: separate;
  border-spacing: 0;
  table-layout: fixed;
  font-family: ${UI};
  font-size: 14px;

  th {
    height: 40px;
    padding: 0 0 10px 2px;
    overflow: hidden;
    background: linear-gradient(#f6c842, #f6c842) 0 12px / 1px 9px no-repeat ${COLORS.light};
    font-weight: 400;
    text-align: left;
    white-space: nowrap;
  }

  th:last-child {
    border-left: 1px solid #5a9bd5;
    background: ${COLORS.light};
    padding-left: 1px;
  }

  td {
    height: 28px;
    padding: 0 0 3px 2px;
    border-right: 1px solid ${COLORS.grid};
    border-bottom: 1px solid #d5e0f5;
    background: #fff;
  }

  td:last-child {
    border-right: 0;
    padding-left: 1px;
  }

  tbody tr:nth-child(odd) td {
    background: ${COLORS.yellow};
  }

  tbody tr:first-child td {
    background: linear-gradient(#e2eafb, #c9d7f4);
  }
`;

const Clip = styled.span`
  display: block;
  overflow: hidden;
  white-space: nowrap;
`;

const QuickScrollY = styled.div`
  display: flex;
  flex-direction: column;
  align-items: center;
  padding: 4px 0 6px;

  svg:last-child {
    margin-top: auto;
  }
`;

const QuickScrollX = styled.div`
  display: flex;
  align-items: center;
  height: 22px;
  padding: 0 26px 2px 6px;
  border-bottom: 1px solid #808080;
  background: ${COLORS.light};

  svg:last-child {
    margin-left: auto;
  }
`;

const ShortThumb = styled.div`
  width: ${({ $flat }) => ($flat ? 15 : 3)}px;
  height: ${({ $flat }) => ($flat ? 3 : 15)}px;
  margin: ${({ $flat }) => ($flat ? "0 0 0 7px" : "8px 0 0")};
  border-radius: 2px;
  background: #a0a0a0;
`;

const QuickFoot = styled.div`
  display: grid;
  grid-template-columns: 94px 88px 87px 1fr;
  grid-auto-rows: 22px;
  align-items: center;
  height: 49px;
  padding: 10px 0 0 6px;
  overflow: hidden;
  background: ${COLORS.bar};
  color: #808080;
  font-size: 14px;
`;

/* ---------- Statistics ---------- */

const StatPanel = styled.section`
  display: flex;
  flex-direction: column;
  flex: 1;
  margin: 0 4px 0 13px;
  font-size: 14px;
`;

const Tabs = styled.div`
  display: flex;
  gap: 3px;
  height: 31px;
  padding-left: 1px;
`;

const Tab = styled.button`
  height: 27px;
  width: ${({ $first }) => ($first ? "64px" : "auto")};
  padding: 0 9px 3px 8px;
  background: ${COLORS.light};
  font-size: 16px;
  text-align: left;

  ${({ $active }) =>
    $active &&
    css`
      height: 25px;
      margin: 0 2px 0 3px;
      padding: 0 4px;
      border: 2px solid;
      border-color: #a0a0a0 #d8d8d8 #d8d8d8 #a0a0a0;
      background: repeating-conic-gradient(#dcdcdc 0 25%, #f4f4f4 0 50%) 0 0 / 2px 2px;
    `}
`;

const TabLine = styled.span`
  width: 1px;
  height: 23px;
  background: #a0a0a0;
`;

const Country = styled.div`
  margin-left: 1px;
  padding-bottom: 2px;
  background: ${COLORS.panelHead};
  font-size: 16px;
  line-height: 19px;
  text-align: center;
`;

const StatTable = styled.table`
  display: block;
  flex: 1;
  margin: 0 2px 0 3px;

  tr {
    display: grid;
    grid-template-columns: 118fr repeat(9, 44fr) 48fr;
  }

  th {
    padding: 0;
    font-weight: 400;
    text-align: left;
  }

  thead,
  tbody {
    display: grid;
    gap: 21px;
  }

  thead th {
    line-height: 30px;
    padding-bottom: 8px;
  }

  tbody th {
    padding-left: 2px;
    line-height: 26px;
  }

  tbody tr {
    height: 25px;
  }

  tbody tr:nth-child(odd) {
    background: #c0c0c0;
  }

  td {
    padding: 2px 0 0;
  }
`;

const StatBox = styled.div`
  width: 17px;
  height: 17px;
  border: 1px solid rgba(128, 128, 128, 0.6);
  border-radius: 2px;
  background: ${({ $mark }) => BOX_FILL[$mark]};
`;

const StatFoot = styled.footer`
  display: flex;
  justify-content: space-between;
  height: 79px;
  margin-left: 1px;
  padding: 7px 12px 0 10px;
  border-top: 1px solid #808080;
  background: ${COLORS.bar};
`;

const Legend = styled.div`
  display: grid;
  grid-template-columns: repeat(3, 110px);
  grid-auto-rows: 18px;
  color: #808080;
  font-size: 13px;
`;

const LegendItem = styled.span`
  display: flex;
  align-items: center;
  gap: 8px;

  &::before {
    content: "";
    width: 12px;
    height: 12px;
    border: 1px solid #c8c8c8;
    background: ${({ $color }) => $color};
  }
`;

const LogButton = styled.button`
  display: flex;
  flex-direction: column;
  align-items: center;
  gap: 6px;
  line-height: 17px;

  span {
    text-align: left;
  }
`;

export default App;
